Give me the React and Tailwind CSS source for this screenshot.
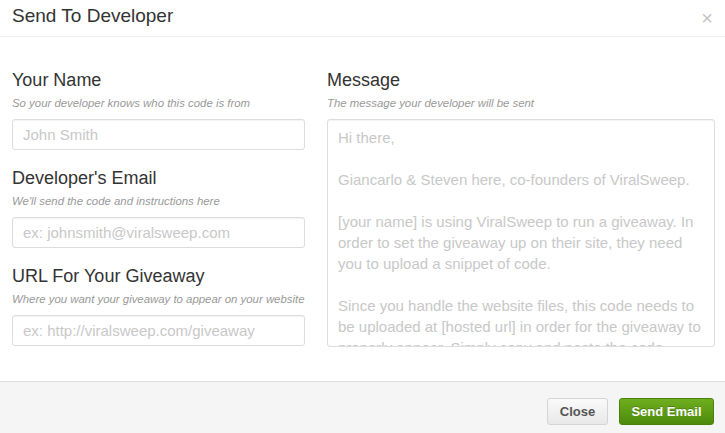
import React from "react";

const FONT = "font-['Liberation_Sans',Arial,sans-serif]";

const MESSAGE_LINES = [
  "Hi there,",
  "",
  "Giancarlo & Steven here, co-founders of ViralSweep.",
  "",
  "[your name] is using ViralSweep to run a giveaway. In",
  "order to set the giveaway up on their site, they need",
  "you to upload a snippet of code.",
  "",
  "Since you handle the website files, this code needs to",
  "be uploaded at [hosted url] in order for the giveaway to",
  "properly appear. Simply copy and paste the code",
];

const Label = ({ label, hint }) => (
  <>
    <label className="text-[18px] leading-[22px] text-[#333]">{label}</label>
    <p className="mt-[5px] text-[11.4px] leading-[14px] italic text-[#999]">{hint}</p>
  </>
);

const Field = ({ label, hint, placeholder }) => (
  <div className="flex flex-col">
    <Label label={label} hint={hint} />
    <input
      type="text"
      placeholder={placeholder}
      className="mt-[9px] h-[31px] w-full rounded-[3px] border border-[#ddd] bg-white px-[10px] text-[15px] text-[#555] shadow-[inset_0_1px_1px_rgba(0,0,0,0.05)] outline-none placeholder:text-[#c8c8c8]"
    />
  </div>
);

const App = () => {
  return (
    <div className={`flex h-[433px] w-[725px] flex-col overflow-hidden bg-white ${FONT}`}>
      <div className="flex h-[37px] items-center justify-between border-b border-[#eee] pl-[12px] pr-[12px]">
        <h2 className="pb-[4px] text-[19px] leading-[22px] text-[#333]">Send To Developer</h2>
        <button className="text-[20px] leading-none text-[#c4c4c4]">×</button>
      </div>

      <div className="flex gap-[22px] pl-[12px] pr-[10px] pt-[32px]">
        <div className="flex w-[293px] shrink-0 flex-col gap-[17px]">
          <Field label="Your Name" hint="So your developer knows who this code is from" placeholder="John Smith" />
          <Field label="Developer's Email" hint="We'll send the code and instructions here" placeholder="ex: johnsmith@viralsweep.com" />
          <Field label="URL For Your Giveaway" hint="Where you want your giveaway to appear on your website" placeholder="ex: http://viralsweep.com/giveaway" />
        </div>

        <div className="flex w-[388px] shrink-0 flex-col">
          <Label label="Message" hint="The message your developer will be sent" />
          <div className="mt-[9px] h-[228px] overflow-hidden rounded-[3px] border border-[#ddd] bg-white px-[10px] pt-[7px] text-[15px] leading-[21px] text-[#c8c8c8] shadow-[inset_0_1px_1px_rgba(0,0,0,0.05)]">
            {MESSAGE_LINES.map((line, i) => (
              <div key={i} className="h-[21px] whitespace-nowrap">{line}</div>
            ))}
          </div>
        </div>
      </div>

      <div className="mt-auto flex h-[52px] items-start justify-end gap-[11px] border-t border-[#ddd] bg-[#f5f5f5] px-[11px] pt-[16px]">
        <button className="h-[27px] w-[61px] rounded-[3px] border border-[#d4d4d4] bg-gradient-to-b from-[#fafafa] to-[#e8e8e8] text-[13px] font-bold text-[#555]">
          Close
        </button>
        <button className="h-[27px] w-[95px] rounded-[3px] border border-[#4a8209] bg-gradient-to-b from-[#6fae1f] to-[#4c8b0a] text-[13px] font-bold text-white [text-shadow:0_-1px_0_rgba(0,0,0,0.2)]">
          Send Email
        </button>
      </div>
    </div>
  );
};

export default App;
